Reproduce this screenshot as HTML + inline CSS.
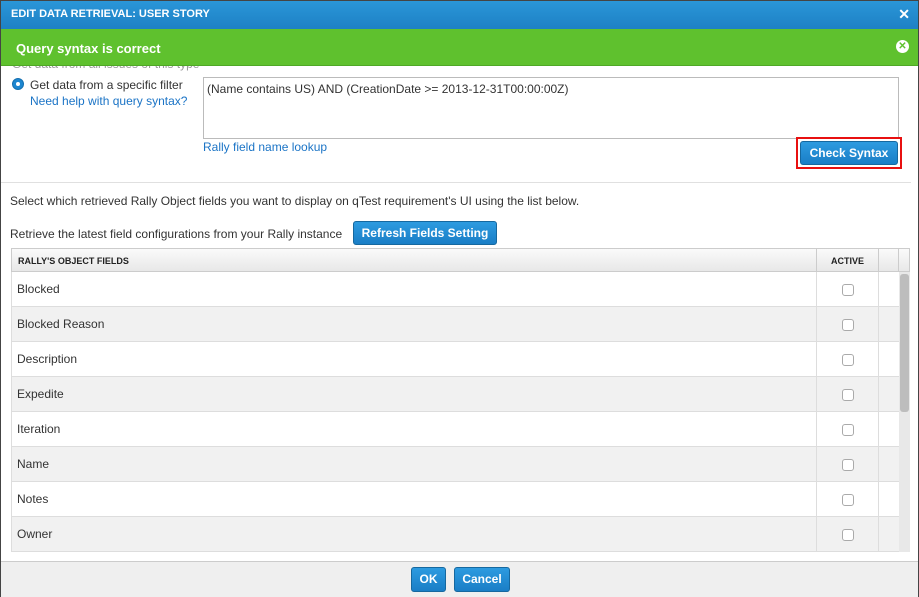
<!DOCTYPE html>
<html><head><style>
*{box-sizing:border-box;margin:0;padding:0}
body{width:919px;height:597px;overflow:hidden;font-family:"Liberation Sans",Arial,sans-serif;font-size:12px;color:#333;background:#fff;position:relative;border:1px solid #444}
.abs{position:absolute}
.title{left:0;top:0;width:917px;height:29px;background:linear-gradient(#2a96d8,#1d80c4);color:#fff;font-weight:bold;font-size:11px;padding:7px 10px}
.green{left:0;top:28px;width:917px;height:37px;background:#5fc12e;color:#fff;font-weight:bold;font-size:13px;padding:12px 15px;border-bottom:1px solid #4fa826}
a{color:#1b74c6;text-decoration:none}
.btn{background:linear-gradient(#2d9be0,#1a7ec6);color:#fff;font-weight:bold;border:1px solid #16689f;border-radius:3px;text-align:center}
.row{left:11px;width:888px;height:35px;border-bottom:1px solid #ddd;padding:10px 6px}
.cb{position:absolute;left:831px;top:12px;width:12px;height:12px;border:1px solid #aaa;border-radius:3px;background:#fff}
</style></head><body>
<div class="abs title">EDIT DATA RETRIEVAL: USER STORY<span style="position:absolute;right:8px;top:5px;font-size:14px">✕</span></div>
<div class="abs" style="left:11px;top:56px;color:#999">Get data from all issues of this type</div>
<div class="abs green">Query syntax is correct
<span style="position:absolute;right:9px;top:11px;width:13px;height:13px;border-radius:50%;background:#fff;color:#5fc12e;font-size:10px;line-height:13px;text-align:center">✕</span></div>
<div class="abs" style="left:11px;top:77px;width:12px;height:12px;border-radius:50%;background:#1d86d0;border:1px solid #1670b0"><div style="margin:3px;width:4px;height:4px;border-radius:50%;background:#fff"></div></div>
<div class="abs" style="left:29px;top:77px">Get data from a specific filter</div>
<div class="abs" style="left:29px;top:93px"><a>Need help with query syntax?</a></div>
<div class="abs" style="left:202px;top:76px;width:696px;height:62px;border:1px solid #bbb;padding:4px 3px">(Name contains US) AND (CreationDate &gt;= 2013-12-31T00:00:00Z)</div>
<div class="abs" style="left:202px;top:139px"><a>Rally field name lookup</a></div>
<div class="abs" style="left:795px;top:136px;width:106px;height:32px;border:2px solid #e81010"></div>
<div class="abs btn" style="left:799px;top:140px;width:98px;height:24px;line-height:22px">Check Syntax</div>
<div class="abs" style="left:0;top:181px;width:910px;border-top:1px solid #e0e0e0"></div>
<div class="abs" style="left:9px;top:193px">Select which retrieved Rally Object fields you want to display on qTest requirement's UI using the list below.</div>
<div class="abs" style="left:9px;top:226px">Retrieve the latest field configurations from your Rally instance</div>
<div class="abs btn" style="left:352px;top:220px;width:144px;height:24px;line-height:22px">Refresh Fields Setting</div>
<div class="abs" style="left:10px;top:247px;width:899px;height:24px;background:linear-gradient(#fafafa,#e8e8e8);border:1px solid #ccc;font-size:9px;font-weight:bold;color:#222;padding:7px 6px">RALLY'S OBJECT FIELDS
<span style="position:absolute;left:804px;top:0;width:63px;height:22px;border-left:1px solid #ccc;border-right:1px solid #ccc;text-align:center;padding-top:7px">ACTIVE</span>
<span style="position:absolute;left:886px;top:0;height:22px;border-left:1px solid #ccc"></span></div>
<div class="abs" style="left:10px;top:271px;width:888px;height:280px;overflow:hidden">
<div class="abs row" style="left:0;top:0;background:#fff">Blocked<span class="cb"></span></div>
<div class="abs row" style="left:0;top:35px;background:#f1f1f1">Blocked Reason<span class="cb"></span></div>
<div class="abs row" style="left:0;top:70px;background:#fff">Description<span class="cb"></span></div>
<div class="abs row" style="left:0;top:105px;background:#f1f1f1">Expedite<span class="cb"></span></div>
<div class="abs row" style="left:0;top:140px;background:#fff">Iteration<span class="cb"></span></div>
<div class="abs row" style="left:0;top:175px;background:#f1f1f1">Name<span class="cb"></span></div>
<div class="abs row" style="left:0;top:210px;background:#fff">Notes<span class="cb"></span></div>
<div class="abs row" style="left:0;top:245px;background:#f1f1f1">Owner<span class="cb"></span></div>
<div class="abs" style="left:805px;top:0;height:280px;border-left:1px solid #ddd"></div>
<div class="abs" style="left:867px;top:0;height:280px;border-left:1px solid #ddd"></div>
</div>
<div class="abs" style="left:10px;top:271px;height:280px;border-left:1px solid #ddd"></div>
<div class="abs" style="left:898px;top:271px;width:11px;height:280px;background:#e8e8e8"><div style="margin:2px 1px;height:138px;background:#bdbdbd;border-radius:3px"></div></div>
<div class="abs" style="left:0;top:560px;width:917px;height:36px;background:#efefef;border-top:1px solid #ccc"></div>
<div class="abs btn" style="left:410px;top:566px;width:35px;height:25px;line-height:23px">OK</div>
<div class="abs btn" style="left:453px;top:566px;width:56px;height:25px;line-height:23px">Cancel</div>
</body></html>
